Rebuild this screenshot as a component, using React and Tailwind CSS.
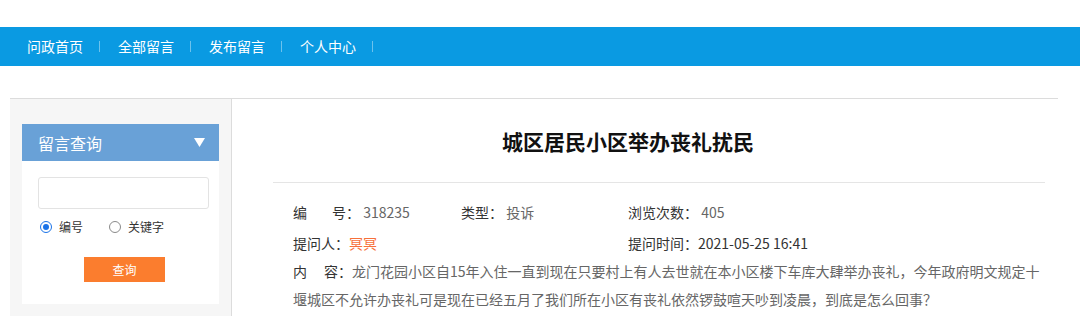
import React from "react";

const FONT = { fontFamily: '"Noto Sans CJK SC", "Noto Sans", sans-serif' };

function NavItem({ label }) {
  return (
    <div className="flex items-center">
      <span className="text-[14px] leading-[39px] text-white">{label}</span>
      <span className="ml-[16px] mr-[18px] h-[11px] w-px bg-white/40" />
    </div>
  );
}

function Radio({ checked, label, className = "" }) {
  return (
    <label className={"flex items-center " + className}>
      <span
        className={
          "flex h-[12px] w-[12px] items-center justify-center rounded-full border " +
          (checked ? "border-[#1a73e8] bg-white" : "border-[#8a8a8a] bg-white")
        }
      >
        {checked && <span className="h-[6px] w-[6px] rounded-full bg-[#1a73e8]" />}
      </span>
      <span className="ml-[7px] text-[12px] leading-[20px] text-[#333]">{label}</span>
    </label>
  );
}

export default function App() {
  return (
    <div className="h-[316px] w-[1080px] overflow-hidden bg-white" style={FONT}>
      {/* top white strip */}
      <div className="h-[27px]" />
      {/* nav */}
      <div className="flex h-[39px] items-center bg-[#0a9ae2] pl-[27px]">
        <NavItem label="问政首页" />
        <NavItem label="全部留言" />
        <NavItem label="发布留言" />
        <NavItem label="个人中心" />
      </div>

      {/* main */}
      <div className="ml-[10px] mt-[32px] flex w-[1048px] border-t border-[#dcdcdc]">
        {/* left column */}
        <div className="w-[222px] shrink-0 border-r border-[#dcdcdc] bg-[#f6f6f6] pl-[12px] pr-[12px] pt-[25px] h-[260px]">
          <div className="w-[197px]">
            <div className="flex h-[37px] items-center justify-between bg-[#69a1d7] pl-[16px] pr-[14px]">
              <span className="text-[16px] text-white">留言查询</span>
              <svg width="11" height="9" viewBox="0 0 11 9">
                <polygon points="0,0 11,0 5.5,9" fill="#ffffff" />
              </svg>
            </div>
            <div className="bg-white pb-[22px] pt-[16px]">
              <div className="ml-[16px] h-[32px] w-[171px] rounded-[3px] border border-[#e3e3e3] bg-white" />
              <div className="mt-[8px] flex items-center pl-[18px]">
                <Radio checked label="编号" />
                <Radio label="关键字" className="ml-[26px]" />
              </div>
              <div className="mt-[20px] flex justify-center">
                <button className="ml-[8px] h-[25px] w-[81px] bg-[#fb7d2e] text-[12px] text-white">
                  查询
                </button>
              </div>
            </div>
          </div>
        </div>

        {/* right column */}
        <div className="flex-1">
          <h1 className="ml-[270px] mt-[27px] text-[21px] font-bold leading-[30px] text-[#111]">
            城区居民小区举办丧礼扰民
          </h1>
          <div className="ml-[41px] mt-[26px] w-[772px] border-t border-[#e5e5e5]" />
          <div className="ml-[61px] mt-[15px] text-[14px] text-[#333]">
            <div className="mb-[3px] flex leading-[28px]">
              <div className="w-[168px]">
                <span>编</span>
                <span className="ml-[25px]">号：</span>
                <span className="text-[#666]"> 318235</span>
              </div>
              <div className="w-[167px]">
                <span>类型：</span>
                <span className="text-[#666]"> 投诉</span>
              </div>
              <div>
                <span>浏览次数：</span>
                <span className="text-[#666]"> 405</span>
              </div>
            </div>
            <div className="flex leading-[28px]">
              <div className="w-[335px]">
                <span>提问人：</span>
                <span className="text-[#f7703a]">冥冥</span>
              </div>
              <div>
                <span>提问时间：</span>
                <span>2021-05-25 16:41</span>
              </div>
            </div>
            <div className="leading-[28px] text-[#666] whitespace-nowrap">
              <span className="text-[#333]">内</span>
              <span className="ml-[17px] text-[#333]">容：</span>
              龙门花园小区自15年入住一直到现在只要村上有人去世就在本小区楼下车库大肆举办丧礼，今年政府明文规定十
              <br />
              堰城区不允许办丧礼可是现在已经五月了我们所在小区有丧礼依然锣鼓喧天吵到凌晨，到底是怎么回事？
            </div>
          </div>
        </div>
      </div>
    </div>
  );
}
